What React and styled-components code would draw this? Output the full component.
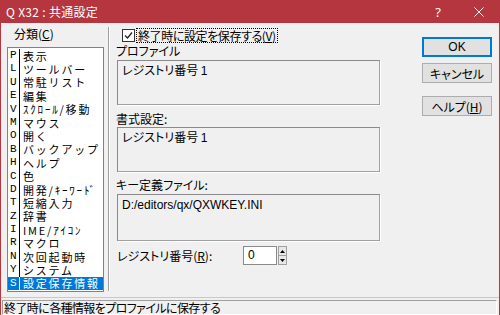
import React from 'react'
import styled, { createGlobalStyle } from 'styled-components'

const RED = '#b5363e'

const GlobalStyle = createGlobalStyle`
  html, body { margin: 0; padding: 0; background: #f0f0f0; }
  body { font-family: "Noto Sans CJK JP", "Noto Sans", sans-serif; }
`

const categories = [
  ['P', '表示'],
  ['L', 'ツールバー'],
  ['U', '常駐リスト'],
  ['E', '編集'],
  ['V', 'ｽｸﾛｰﾙ/移動'],
  ['M', 'マウス'],
  ['O', '開く'],
  ['B', 'バックアップ'],
  ['H', 'ヘルプ'],
  ['C', '色'],
  ['D', '開発/ｷｰﾜｰﾄﾞ'],
  ['T', '短縮入力'],
  ['Z', '辞書'],
  ['I', 'IME/ｱｲｺﾝ'],
  ['R', 'マクロ'],
  ['N', '次回起動時'],
  ['Y', 'システム'],
  ['S', '設定保存情報'],
]

const Window = styled.div`
  width: 500px;
  height: 315px;
  box-sizing: border-box;
  display: flex;
  flex-direction: column;
  background: #f0f0f0;
  border-left: 1px solid ${RED};
  border-right: 1px solid ${RED};
  font-size: 12px;
  color: #000;
  overflow: hidden;
  font-feature-settings: "palt";
`

const TitleBar = styled.div`
  height: 23px;
  flex: none;
  display: flex;
  align-items: center;
  margin: 0 -1px;
  padding-left: 6px;
  background: ${RED};
  color: #fff;
`

const TitleText = styled.div`
  flex: 1;
  font-size: 12px;
  letter-spacing: 0.3px;
`

const TitleButton = styled.div`
  width: ${p => p.$w}px;
  height: 23px;
  display: flex;
  align-items: center;
  justify-content: center;
  font-family: "Noto Sans", sans-serif;
  font-size: 13px;
`

const Body = styled.div`
  flex: 1;
  min-height: 0;
  display: flex;
  align-items: flex-start;
  padding: 4px 0 0 6px;
`

const LeftPane = styled.div`
  width: 97px;
  flex: none;
`

const CategoryLabel = styled.div`
  height: 20px;
  padding: 1px 0 0 7px;
  box-sizing: border-box;
  line-height: 12px;
`

const ListBox = styled.div`
  background: #fff;
  border: 1px solid #828282;
  padding: 1px 0 1px;
`

const Item = styled.div`
  display: flex;
  align-items: center;
  height: 13.4px;
  white-space: nowrap;
  background: ${p => (p.$selected ? '#0078d7' : 'transparent')};
  color: ${p => (p.$selected ? '#fff' : '#000')};
`

const Key = styled.span`
  width: 9px;
  height: 100%;
  padding-left: 2px;
  flex: none;
  border-right: 1px solid ${p => (p.$selected ? '#fff' : '#000')};
  font-family: "Liberation Mono", monospace;
  font-size: 11px;
  line-height: 13px;
`

const Name = styled.span`
  padding-left: 3px;
  font-size: 11px;
  line-height: 12px;
  letter-spacing: 1.8px;
  font-feature-settings: normal;
`

const Separator = styled.div`
  flex: none;
  width: 0;
  height: 264px;
  margin-left: 4px;
  border-left: 1px solid #a0a0a0;
  border-right: 1px solid #fff;
`

const MainPane = styled.div`
  width: 264px;
  flex: none;
  margin-left: 6px;
  display: flex;
  flex-direction: column;
`

const CheckRow = styled.div`
  height: 16px;
  display: flex;
  align-items: center;
  padding-left: 6px;
`

const CheckBox = styled.div`
  width: 11px;
  height: 11px;
  flex: none;
  border: 1px solid #333;
  background: #fff;
  display: flex;
  align-items: center;
  justify-content: center;
`

const CheckText = styled.span`
  margin-left: 2px;
  padding: 0 1px;
  line-height: 13px;
  letter-spacing: -0.4px;
  white-space: nowrap;
  outline: 1px dotted #000;
`

const FieldLabel = styled.div`
  margin-top: ${p => p.$top}px;
  line-height: 12px;
  height: 12px;
`

const ReadBox = styled.div`
  margin: ${p => p.$top}px 0 0 1px;
  height: ${p => p.$h}px;
  box-sizing: border-box;
  border: 1px solid #a0a0a0;
  border-top-color: #8a8a8a;
  border-left-color: #8a8a8a;
  box-shadow: 1px 1px 0 #fff;
  padding: 2px 4px;
  line-height: 14px;
`

const Mono = styled.span`
  font-family: "Liberation Sans", sans-serif;
  font-size: 12px;
`

const RegRow = styled.div`
  margin-top: 5px;
  display: flex;
  align-items: center;
  height: 19px;
`

const RegLabel = styled.div`
  width: 126px;
  padding-left: 1px;
`

const SpinInput = styled.div`
  width: 34px;
  height: 19px;
  box-sizing: border-box;
  background: #fff;
  border: 1px solid #8a8a8a;
  padding-left: 4px;
  line-height: 17px;
  font-family: "Liberation Sans", sans-serif;
`

const Spinner = styled.div`
  width: 9px;
  height: 19px;
  margin-left: 1px;
  display: flex;
  flex-direction: column;
  box-sizing: border-box;
  border: 1px solid #a0a0a0;
  background: #e8e8e8;
`

const SpinPart = styled.div`
  flex: 1;
  display: flex;
  align-items: center;
  justify-content: center;
  border-top: ${p => (p.$lower ? '1px solid #a0a0a0' : 'none')};
`

const ButtonCol = styled.div`
  margin-left: auto;
  margin-right: 7px;
  padding-top: 10px;
  display: flex;
  flex-direction: column;
`

const Button = styled.div`
  width: 70px;
  height: 20px;
  margin-top: ${p => p.$top || 0}px;
  box-sizing: border-box;
  display: flex;
  align-items: center;
  justify-content: center;
  background: #e1e1e1;
  border: 1px solid ${p => (p.$default ? '#0078d7' : '#adadad')};
  box-shadow: ${p => (p.$default ? 'inset 0 0 0 1px #0078d7' : 'none')};
  font-size: 12px;
`

const OkText = styled.span`
  font-family: "Liberation Sans", sans-serif;
  font-size: 12px;
`

const StatusBar = styled.div`
  height: 18px;
  flex: none;
  box-sizing: border-box;
  border-top: 1px solid #c8c8c8;
  padding: 2px 2px 0 1px;
`

const StatusPanel = styled.div`
  height: 15px;
  box-sizing: border-box;
  border: 1px solid;
  border-color: #a0a0a0 #fff #fff #a0a0a0;
  padding-left: 1px;
  line-height: 13px;
  letter-spacing: -0.6px;
  white-space: nowrap;
`

const U = styled.span`
  text-decoration: underline;
`

const CheckMark = () => (
  <svg width="9" height="9" viewBox="0 0 9 9">
    <path d="M1 4.5 L3.5 7 L8 1.5" fill="none" stroke="#222" strokeWidth="1.3" />
  </svg>
)

const Arrow = ({ down }) => (
  <svg width="5" height="3" viewBox="0 0 5 3">
    <path d={down ? 'M0 0 H5 L2.5 3 Z' : 'M0 3 H5 L2.5 0 Z'} fill="#000" />
  </svg>
)

const CloseIcon = () => (
  <svg width="10" height="10" viewBox="0 0 10 10">
    <path d="M0.5 0.5 L9.5 9.5 M9.5 0.5 L0.5 9.5" stroke="#fff" strokeWidth="1" />
  </svg>
)

export default function App() {
  return (
    <>
      <GlobalStyle />
      <Window>
        <TitleBar>
          <TitleText>Q X32 : 共通設定</TitleText>
          <TitleButton $w={40}>?</TitleButton>
          <TitleButton $w={42}><CloseIcon /></TitleButton>
        </TitleBar>

        <Body>
          <LeftPane>
            <CategoryLabel>分類(<U>C</U>)</CategoryLabel>
            <ListBox>
              {categories.map(([key, name]) => {
                const selected = key === 'S'
                return (
                  <Item key={key} $selected={selected}>
                    <Key $selected={selected}>{key}</Key>
                    <Name>{name}</Name>
                  </Item>
                )
              })}
            </ListBox>
          </LeftPane>

          <Separator />

          <MainPane>
            <CheckRow>
              <CheckBox><CheckMark /></CheckBox>
              <CheckText>終了時に設定を保存する(<U>V</U>)</CheckText>
            </CheckRow>

            <FieldLabel $top={2}>プロファイル</FieldLabel>
            <ReadBox $top={3} $h={45}>レジストリ番号 <Mono>1</Mono></ReadBox>

            <FieldLabel $top={8}>書式設定:</FieldLabel>
            <ReadBox $top={2} $h={45}>レジストリ番号 <Mono>1</Mono></ReadBox>

            <FieldLabel $top={7}>キー定義ファイル:</FieldLabel>
            <ReadBox $top={3} $h={47}><Mono>D:/editors/qx/QXWKEY.INI</Mono></ReadBox>

            <RegRow>
              <RegLabel>レジストリ番号(<U>R</U>):</RegLabel>
              <SpinInput>0</SpinInput>
              <Spinner>
                <SpinPart><Arrow /></SpinPart>
                <SpinPart $lower><Arrow down /></SpinPart>
              </Spinner>
            </RegRow>
          </MainPane>

          <ButtonCol>
            <Button $default><OkText>OK</OkText></Button>
            <Button $top={6}>キャンセル</Button>
            <Button $top={13}>ヘルプ(<U>H</U>)</Button>
          </ButtonCol>
        </Body>

        <StatusBar>
          <StatusPanel>終了時に各種情報をプロファイルに保存する</StatusPanel>
        </StatusBar>
      </Window>
    </>
  )
}
